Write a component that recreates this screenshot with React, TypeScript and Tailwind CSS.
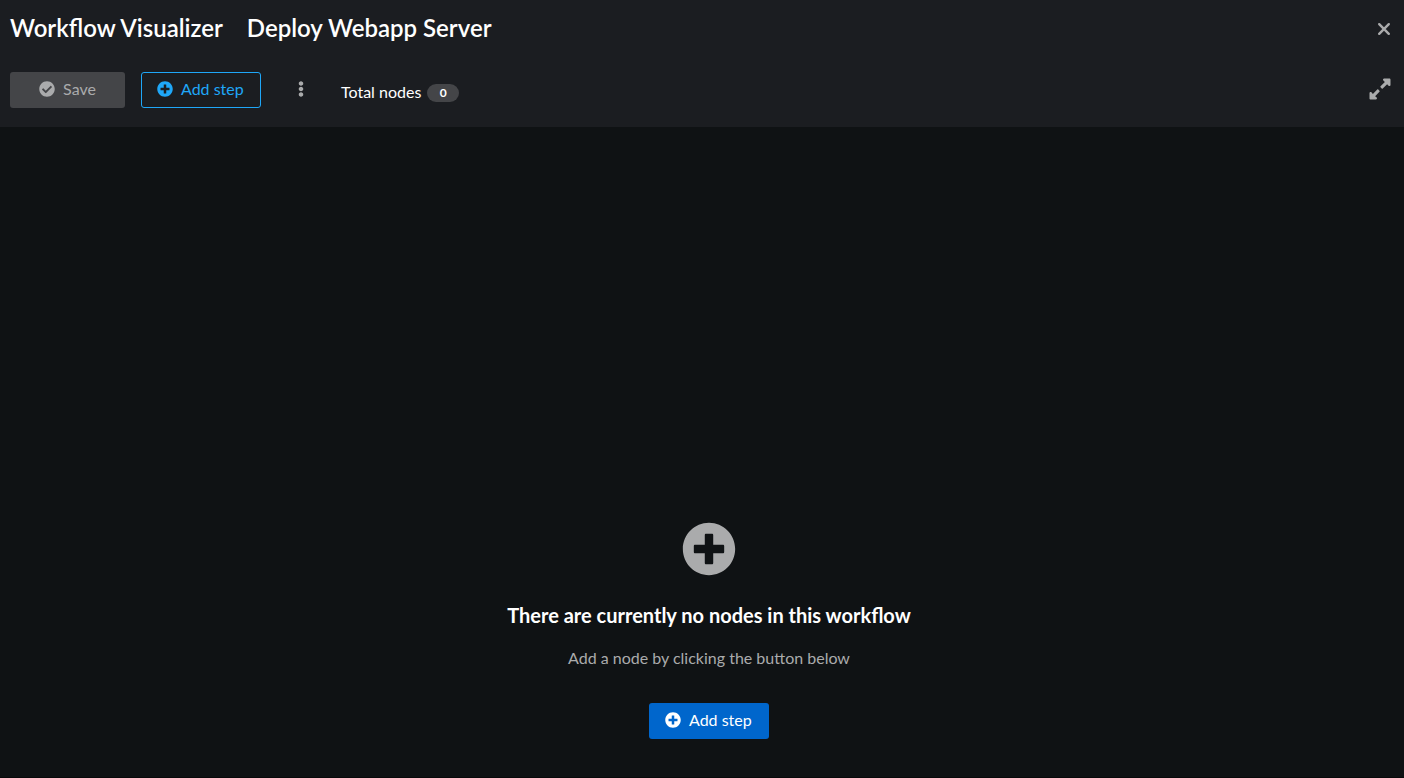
import { FaCheckCircle, FaEllipsisV, FaExpandAlt, FaPlusCircle } from "react-icons/fa";

function CloseIcon() {
  return (
    <svg viewBox="0 0 14 14" className="size-3.5" fill="none" stroke="currentColor" strokeWidth="2.4" strokeLinecap="round" aria-hidden="true">
      <path d="M2.2 2.2 11.8 11.8M11.8 2.2 2.2 11.8" />
    </svg>
  );
}

function Header() {
  return (
    <header className="bg-[#1b1d21] px-2.5 pb-[19px]">
      <div className="flex h-14 items-center justify-between">
        <div className="flex items-center gap-6 text-2xl font-semibold text-white">
          <h1>Workflow Visualizer</h1>
          <h2>Deploy Webapp Server</h2>
        </div>
        <button type="button" aria-label="Close" className="flex h-8 w-5 items-center justify-center pt-0.5 text-[#aaabac]">
          <CloseIcon />
        </button>
      </div>
      <div className="mt-4 flex h-9 items-center">
        <button
          type="button"
          disabled
          className="flex h-9 w-[115px] items-center justify-center gap-2 rounded-[3px] bg-[#444548] pb-0.5 text-base text-[#aaabac]"
        >
          <FaCheckCircle className="size-4" />
          Save
        </button>
        <button
          type="button"
          className="ml-4 flex h-9 w-[120px] items-center gap-2 rounded-[3px] border border-[#1fa7f8] pb-0.5 pl-[15px] text-base text-[#1fa7f8]"
        >
          <FaPlusCircle className="size-4" />
          Add step
        </button>
        <button type="button" aria-label="More actions" className="ml-5 flex h-9 w-10 items-center justify-center pb-0.5 text-[#aaabac]">
          <FaEllipsisV className="size-4" />
        </button>
        <div className="ml-5 flex items-center gap-1.5 pt-1 text-base text-white">
          <span>Total nodes</span>
          <span className="mt-0.5 flex h-[18px] w-8 items-center justify-center rounded-full bg-[#444548] text-xs font-bold">0</span>
        </div>
        <button type="button" aria-label="Expand" className="ml-auto flex h-9 w-7 items-center justify-center pb-0.5 text-[#aaabac]">
          <FaExpandAlt className="size-6" />
        </button>
      </div>
    </header>
  );
}

function EmptyWorkflow() {
  return (
    <main className="flex grow flex-col items-center justify-end pb-[38px] pl-3.5 text-center">
      <FaPlusCircle className="size-[54px] text-[#aaabac]" />
      <h3 className="mt-6 text-xl leading-[30px] font-bold text-white">There are currently no nodes in this workflow</h3>
      <p className="mt-4 text-base text-[#aaabac]">Add a node by clicking the button below</p>
      <button
        type="button"
        className="mt-[33px] flex h-9 w-[120px] items-center gap-2 rounded-[3px] bg-[#0066cc] pb-0.5 pl-4 text-base text-white"
      >
        <FaPlusCircle className="size-4" />
        Add step
      </button>
    </main>
  );
}

export default function App() {
  return (
    <div className="flex min-h-screen flex-col border-b border-[#08090a] bg-[#0f1214] font-[Lato,sans-serif]">
      <Header />
      <EmptyWorkflow />
    </div>
  );
}
